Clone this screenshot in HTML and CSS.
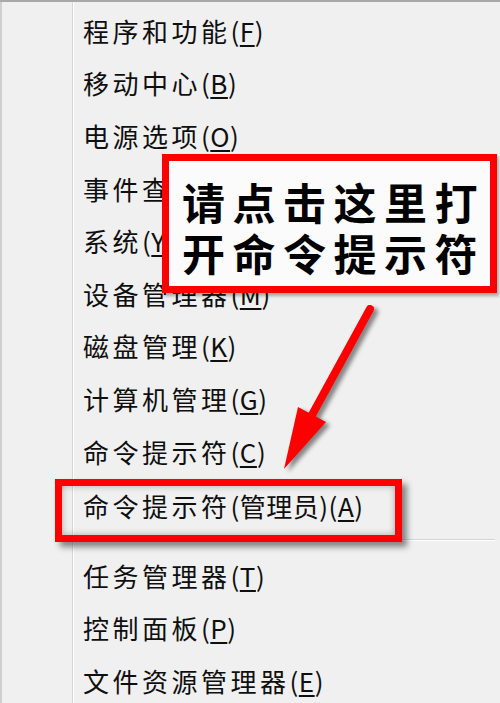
FILE: index.html
```html
<!DOCTYPE html>
<html lang="zh-CN">
<head>
<meta charset="utf-8">
<title>菜单</title>
<link rel="stylesheet" href="styles.css">
</head>
<body>
<div class="menu">
  <div class="gutter"></div>
  <ul class="items">
    <li class="item"><span class="cjk">程序和功能</span><span class="key">(<u>F</u>)</span></li>
    <li class="item"><span class="cjk">移动中心</span><span class="key">(<u>B</u>)</span></li>
    <li class="item"><span class="cjk">电源选项</span><span class="key">(<u>O</u>)</span></li>
    <li class="item"><span class="cjk">事件查看器</span><span class="key">(<u>V</u>)</span></li>
    <li class="item"><span class="cjk">系统</span><span class="key">(<u>Y</u>)</span></li>
    <li class="item"><span class="cjk">设备管理器</span><span class="key">(<u>M</u>)</span></li>
    <li class="item"><span class="cjk">磁盘管理</span><span class="key">(<u>K</u>)</span></li>
    <li class="item"><span class="cjk">计算机管理</span><span class="key">(<u>G</u>)</span></li>
    <li class="item"><span class="cjk">命令提示符</span><span class="key">(<u>C</u>)</span></li>
    <li class="item item-admin"><span class="cjk">命令提示符</span><span class="key">(</span><span class="cjk sub">管理员</span><span class="key">)(<u>A</u>)</span></li>
    <li class="sep"></li>
    <li class="item"><span class="cjk">任务管理器</span><span class="key">(<u>T</u>)</span></li>
    <li class="item"><span class="cjk">控制面板</span><span class="key">(<u>P</u>)</span></li>
    <li class="item"><span class="cjk">文件资源管理器</span><span class="key">(<u>E</u>)</span></li>
  </ul>

  <div class="highlight"></div>

  <svg class="arrow" width="500" height="703" viewBox="0 0 500 703" aria-hidden="true">
    <line x1="370" y1="307" x2="312" y2="413" stroke="#ff0000" stroke-width="8" stroke-linecap="round"/>
    <polygon points="284,467 298,405 326,420" fill="#ff0000"/>
  </svg>

  <div class="callout">
    <p class="callout-line">请点击这里打</p>
    <p class="callout-line">开命令提示符</p>
  </div>
</div>
</body>
</html>
```

FILE: styles.css
```css
html, body {
  margin: 0;
  padding: 0;
  background: #f0f0f0;
}

.menu {
  position: relative;
  width: 500px;
  height: 703px;
  overflow: hidden;
  display: flex;
  background: #f0f0f0;
  border-top: 2px solid #a9a9a9;
  box-sizing: border-box;
  font-family: "Noto Sans CJK SC", "Noto Sans", sans-serif;
  color: #0f0f0f;
}

.gutter {
  width: 70px;
  flex: none;
  border-left: 2px solid #d0d0d0;
  border-right: 1px solid #d6d6d6;
  box-shadow: 1px 0 0 #ffffff;
  background: #f0f0f0;
}

.items {
  list-style: none;
  margin: 0;
  padding: 2px 0 0 0;
  flex: 1;
}

.item {
  height: 52.6px;
  display: flex;
  align-items: center;
  padding-left: 10px;
  font-size: 26px;
  white-space: nowrap;
}

.item-admin {
  padding-top: 4px;
  box-sizing: border-box;
}

.cjk {
  letter-spacing: 3.5px;
}

.cjk.sub {
  letter-spacing: 0.5px;
}

.key {
  letter-spacing: 0.5px;
}

.key u {
  text-decoration-thickness: 2px;
  text-underline-offset: 3px;
}

.sep {
  height: 1px;
  background: #d4d4d4;
  border-bottom: 1px solid #ffffff;
  margin: 9px 5px 8px 3px;
}

.highlight {
  position: absolute;
  left: 55px;
  top: 477px;
  width: 347px;
  height: 63px;
  box-sizing: border-box;
  border: 7px solid #ff0000;
  box-shadow: 5px 5px 6px rgba(0, 0, 0, 0.45), inset 0 0 7px rgba(0, 0, 0, 0.3);
}

.arrow {
  position: absolute;
  left: 0;
  top: 0;
  filter: drop-shadow(4px 3px 2px rgba(0, 0, 0, 0.45));
}

.callout {
  position: absolute;
  left: 162px;
  top: 152px;
  width: 335px;
  height: 139px;
  box-sizing: border-box;
  border: 7px solid #ff0000;
  background: #fbfbfb;
  padding: 15px 0 0 13px;
  box-shadow: 2px 3px 3px rgba(0, 0, 0, 0.3);
}

.callout-line {
  margin: 0;
  font-size: 43px;
  line-height: 51px;
  font-weight: 700;
  letter-spacing: 7.5px;
  color: #000000;
  white-space: nowrap;
}
```
